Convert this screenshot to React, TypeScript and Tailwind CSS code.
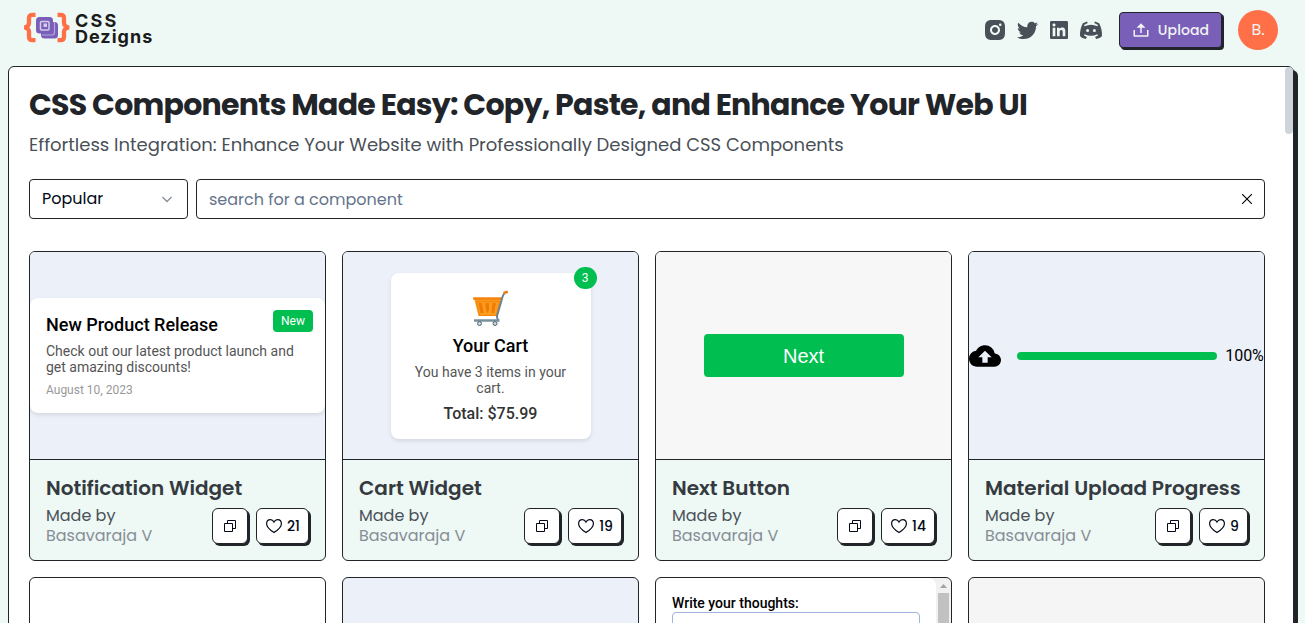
import type { ReactNode } from "react";
import { MdCloudUpload } from "react-icons/md";
import {
  RiInstagramFill,
  RiLinkedinBoxFill,
  RiTwitterFill,
  RiUpload2Line,
} from "react-icons/ri";

type ComponentCardProps = {
  title: string;
  author: string;
  likes: number;
  previewClass: string;
  children: ReactNode;
};

function Logo() {
  return (
    <div className="flex items-start gap-[5px]">
      <svg width="46" height="32" viewBox="0 0 46 32" fill="none">
        <path
          d="M11.500 2.800H8.500Q5 2.800 5 6V11Q5 14.500 0.500 15.500Q5 16.500 5 19.500V25Q5 28.200 8.500 28.200H11.500"
          stroke="#ff7048"
          strokeWidth="4.300"
        />
        <path
          d="M33.500 2.800H36.500Q40 2.800 40 6V11Q40 14.500 45 15.500Q40 16.500 40 19.500V25Q40 28.200 36.500 28.200H33.500"
          stroke="#ff7048"
          strokeWidth="4.300"
        />
        <rect x="17" y="10" width="17" height="16.500" rx="3.500" fill="#7a5fb9" />
        <rect x="12" y="5" width="17" height="16.500" rx="3.500" fill="#7a5fb9" />
        <path d="M30.500 10V20Q30.500 23 28 23H18" stroke="#b5a5da" strokeWidth="1.200" />
        <rect x="16.500" y="9.500" width="8.500" height="8.500" rx="1" stroke="#d5cbea" strokeWidth="1.500" />
        <path d="M19.500 15V11.500H23V15Z" fill="#d5cbea" />
      </svg>
      <div className="pt-px font-[Inter,sans-serif] text-[18px] leading-[16px] font-bold text-[#1b1b1b]">
        <div className="tracking-[2.2px]">CSS</div>
        <div className="tracking-[1px]">Dezigns</div>
      </div>
    </div>
  );
}

function DiscordIcon() {
  return (
    <svg width="24" height="24" viewBox="0 0 24 24" fill="currentColor">
      <path
        fillRule="evenodd"
        d="M8 3.500L3.800 5.200C1.900 9 .8 13 1 18C2.500 19.800 4.500 20.600 6.800 21L8 18.900L5 17.400L5.700 16.300C10 18.300 14 18.300 18.300 16.300L19 17.400L16 18.900L17.200 21C19.500 20.600 21.500 19.800 23 18C23.200 13 22.100 9 20.200 5.200L16 3.500L15.200 5L19 7L18.400 8.200C14 6.200 10 6.200 5.600 8.200L5 7L8.800 5ZM8.600 10.900A1.500 1.500 0 1 1 8.600 13.900A1.500 1.500 0 1 1 8.600 10.900ZM15.400 10.900A1.500 1.500 0 1 1 15.400 13.900A1.500 1.500 0 1 1 15.400 10.900Z"
      />
    </svg>
  );
}

function HeartIcon() {
  return (
    <svg width="18" height="18" viewBox="0 0 18 18" fill="none" stroke="currentColor" strokeWidth="1.200">
      <path d="M9 15.600C6.500 14 1.600 10.800 1.600 6.800C1.600 4.200 3.300 2.700 5.300 2.700C7.200 2.700 8.400 3.900 9 5.100C9.600 3.900 10.800 2.700 12.700 2.700C14.700 2.700 16.400 4.200 16.400 6.800C16.400 10.800 11.500 14 9 15.600Z" />
    </svg>
  );
}

function CartIcon() {
  return (
    <svg width="37" height="37" viewBox="0 0 37 37" fill="none">
      <path d="M2 8H30L25.500 26H6.500Z" fill="#fb9c1b" />
      <path d="M1 7.300H30.500L29.500 10H1.500Z" fill="#f5850f" />
      <path d="M4.500 11.500H27.500L24.500 25.500H7.500Z" stroke="#f5850f" />
      <path
        d="M6.500 13H10L11.500 23H8.500ZM13.200 13H17V20L15.500 23L14 20ZM20.500 13H24L22 23H19.500Z"
        fill="#ef7a08"
      />
      <path d="M33 3Q31.500 4 30.800 6L25 26Q24.500 28 26.500 30.500" stroke="#6b8290" strokeWidth="2" />
      <path d="M31.500 3L35.800 1.700" stroke="#ef7c0d" strokeWidth="2.500" />
      <path d="M2 30.500H27.500" stroke="#78909c" strokeWidth="2.500" />
      <circle cx="7.500" cy="33.500" r="2" fill="#cfd8dc" stroke="#52646e" />
      <circle cx="23" cy="33.500" r="2" fill="#cfd8dc" stroke="#52646e" />
    </svg>
  );
}

function Header() {
  return (
    <header className="flex h-[66px] shrink-0 items-start justify-between pr-[27px] pl-6">
      <div className="pt-3">
        <Logo />
      </div>
      <div className="flex items-center pt-2.5">
        <div className="flex items-center gap-2 text-[#495057]">
          <RiInstagramFill size={24} />
          <RiTwitterFill size={25} className="-mr-px" />
          <RiLinkedinBoxFill size={24} />
          <DiscordIcon />
        </div>
        <button
          type="button"
          className="ml-4 flex h-9 w-[103px] items-center justify-center gap-2 rounded border border-[#212529] bg-[#7a5fb9] text-sm font-medium tracking-[0.1px] text-[#f1f3f5] shadow-[2px_2px_0_#212529]"
        >
          <RiUpload2Line size={18} />
          Upload
        </button>
        <div className="ml-4 flex size-10 items-center justify-center rounded-full bg-[#ff7048] text-base text-[#f1f3f5]">
          B.
        </div>
      </div>
    </header>
  );
}

function Filters() {
  return (
    <div className="mt-5 flex gap-2">
      <button
        type="button"
        className="flex h-10 w-[159px] items-center justify-between rounded border border-[#212529] pr-3.5 pb-px pl-3 text-base text-[#020817]"
      >
        Popular
        <svg width="12" height="12" viewBox="0 0 12 12" fill="none" stroke="#868e96" strokeWidth="1.300">
          <path d="M1.500 4L6 8.500L10.500 4" />
        </svg>
      </button>
      <div className="flex h-10 flex-1 items-center justify-between rounded border border-[#212529] px-3">
        <span className="pt-px text-base text-[#64748b]">search for a component</span>
        <svg width="10" height="10" viewBox="0 0 10 10" fill="none" stroke="#000" strokeWidth="1.100">
          <path d="M0 0L10 10M10 0L0 10" />
        </svg>
      </div>
    </div>
  );
}

function ComponentCard({ title, author, likes, previewClass, children }: ComponentCardProps) {
  return (
    <div className="flex h-[310px] flex-col overflow-hidden rounded-md border border-[#212529] bg-[#eef8f5]">
      <div
        className={`flex h-[208px] items-center justify-center border-b border-[#212529] font-[Roboto,sans-serif] ${previewClass}`}
      >
        {children}
      </div>
      <div className="px-4 pt-3.5">
        <h2 className="text-xl leading-7 font-semibold whitespace-nowrap text-[#343a40]">{title}</h2>
        <div className="mt-1 flex items-start justify-between">
          <div className="text-base leading-5">
            <p className="text-[#495057]">Made by</p>
            <p className="text-[#868e96]">{author}</p>
          </div>
          <div className="mt-0.5 flex gap-2">
            <button
              type="button"
              className="flex size-9 items-center justify-center rounded-md border border-[#212529] bg-white shadow-[2px_2px_0_#212529]"
            >
              <svg width="12" height="12" viewBox="0 0 12 12" fill="none" stroke="#020817">
                <path d="M3.500 3.500V.5H11.500V8.500H8.500M.5 3.500H8.500V11.500H.5Z" />
              </svg>
            </button>
            <button
              type="button"
              className="flex h-9 items-center gap-1 rounded-md border border-[#212529] bg-white px-2 text-sm font-medium text-[#020817] shadow-[2px_2px_0_#212529]"
            >
              <HeartIcon />
              {likes}
            </button>
          </div>
        </div>
      </div>
    </div>
  );
}

export default function App() {
  return (
    <div className="flex h-[623px] flex-col overflow-hidden bg-[#eef8f5] font-[Poppins,Inter,sans-serif]">
      <Header />
      <main className="mr-[11px] ml-2 flex h-[640px] shrink-0 rounded-md border border-[#212529] bg-white shadow-[4px_4px_0_#212529]">
        <div className="w-[1276px] px-5">
          <h1 className="pt-5 text-3xl font-bold tracking-tight whitespace-nowrap text-[#212529]">
            CSS Components Made Easy: Copy, Paste, and Enhance Your Web UI
          </h1>
          <p className="mt-2 text-lg leading-7 whitespace-nowrap text-[#495057]">
            Effortless Integration: Enhance Your Website with Professionally Designed CSS Components
          </p>
          <Filters />

          <div className="mt-8 grid grid-cols-4 gap-4">
            <ComponentCard title="Notification Widget" author="Basavaraja V" likes={21} previewClass="bg-[#ebf0f9]">
              <div className="flex h-[115px] w-full items-start justify-between rounded-lg bg-white pt-3 pr-3 pl-4 shadow-[0_2px_4px_rgba(0,0,0,0.1)]">
                <div className="w-[227px] pt-1">
                  <h3 className="text-lg leading-[22px] font-medium whitespace-nowrap text-black">
                    New Product Release
                  </h3>
                  <p className="mt-[7px] text-sm leading-4 whitespace-nowrap text-[#555]">
                    Check out our latest product launch and
                    <br />
                    get amazing discounts!
                  </p>
                  <p className="mt-2 text-xs leading-3.5 text-[#999]">August 10, 2023</p>
                </div>
                <span className="rounded bg-[#00bf50] px-2 py-1 text-xs leading-3.5 text-white">New</span>
              </div>
            </ComponentCard>

            <ComponentCard title="Cart Widget" author="Basavaraja V" likes={19} previewClass="bg-[#ebf0f9]">
              <div className="relative flex h-[166px] w-[200px] flex-col items-center rounded-lg bg-white pt-[17px] text-center shadow-[0_2px_4px_rgba(0,0,0,0.1)]">
                <CartIcon />
                <h3 className="mt-2 text-lg leading-[22px] font-medium text-black">Your Cart</h3>
                <p className="mt-[7px] w-[160px] text-sm leading-4 text-[#555]">You have 3 items in your cart.</p>
                <p className="mt-2 text-base leading-[19px] font-medium text-[#333]">Total: $75.99</p>
                <span className="absolute -top-1.5 -right-1.5 flex h-[22px] w-[23px] items-center justify-center rounded-full bg-[#00bf50] text-xs text-white">
                  3
                </span>
              </div>
            </ComponentCard>

            <ComponentCard title="Next Button" author="Basavaraja V" likes={14} previewClass="bg-[#f7f7f7]">
              <div className="flex h-[43px] w-[200px] items-center justify-center rounded bg-[#00bf50] font-['Liberation_Sans',sans-serif] text-xl text-white">
                Next
              </div>
            </ComponentCard>

            <ComponentCard
              title="Material Upload Progress"
              author="Basavaraja V"
              likes={9}
              previewClass="bg-[#ebf0f9]"
            >
              <div className="flex items-center">
                <MdCloudUpload size={32} className="shrink-0 text-black" />
                <div className="ml-4 h-2 w-[200px] shrink-0 rounded bg-[#00bf50]" />
                <span className="ml-2 text-base whitespace-nowrap text-black">100%</span>
              </div>
            </ComponentCard>

            <div className="h-[310px] rounded-md border border-[#212529] bg-white" />
            <div className="h-[310px] rounded-md border border-[#212529] bg-[#ebf0f9]" />
            <div className="flex h-[310px] overflow-hidden rounded-md border border-[#212529] bg-[#f1f1f1] font-[Roboto,sans-serif]">
              <div className="flex-1 rounded-lg bg-white px-4 pt-4">
                <label className="block text-sm leading-[18px] font-medium text-black">Write your thoughts:</label>
                <div className="h-24 rounded border border-[#9fb3db]" />
              </div>
              <div className="flex w-[15px] flex-col items-center">
                <svg width="7" height="4" viewBox="0 0 7 4" className="mt-1.5 fill-[#a3a3a3]">
                  <path d="M0 4L3.500 0L7 4Z" />
                </svg>
                <div className="mt-[5px] w-[11px] flex-1 bg-[#c1c1c1]" />
              </div>
            </div>
            <div className="h-[310px] rounded-md border border-[#212529] bg-[#f5f5f5]" />
          </div>
        </div>
        <div className="h-[67px] w-2 rounded bg-[#ced4da]" />
      </main>
    </div>
  );
}
